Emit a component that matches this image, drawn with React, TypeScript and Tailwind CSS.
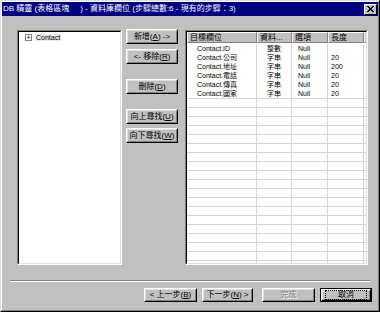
import React from 'react';

const font = { fontFamily: '"Liberation Sans", "Noto Sans CJK TC", sans-serif' };

type Row = { name: string; type: string; opt: string; len: string };

const rows: Row[] = [
  { name: 'Contact.ID', type: '整數', opt: 'Null', len: '' },
  { name: 'Contact.公司', type: '字串', opt: 'Null', len: '20' },
  { name: 'Contact.地址', type: '字串', opt: 'Null', len: '200' },
  { name: 'Contact.電話', type: '字串', opt: 'Null', len: '20' },
  { name: 'Contact.傳真', type: '字串', opt: 'Null', len: '20' },
  { name: 'Contact.國家', type: '字串', opt: 'Null', len: '20' },
];

function Btn({ children, className = '' }: { children: React.ReactNode; className?: string }) {
  // classic raised button
  return (
    <div className={`border border-t-white border-l-white border-r-black border-b-black ${className}`}>
      <div className="h-full border border-t-[#dfdfdf] border-l-[#dfdfdf] border-r-[#808080] border-b-[#808080] flex items-center justify-center text-[8px] leading-none text-black whitespace-nowrap">
        {children}
      </div>
    </div>
  );
}

function HeadCell({ w, children }: { w: string; children?: React.ReactNode }) {
  return (
    <div className={`${w} h-full shrink-0 border border-t-white border-l-white border-r-[#808080] border-b-[#808080] flex items-center pl-[2px] text-[8px] leading-none overflow-hidden whitespace-nowrap`}>
      {children}
    </div>
  );
}

export default function App() {
  const empty = Array.from({ length: 25 - rows.length });

  return (
    <div style={font} className="w-[380px] h-[312px] bg-[#c0c0c0] border border-t-[#dfdfdf] border-l-[#dfdfdf] border-r-black border-b-black overflow-hidden">
      <div className="h-full border border-t-white border-l-white border-r-[#808080] border-b-[#808080] flex flex-col">
        {/* title bar */}
        <div className="h-[14px] bg-[#000080] flex items-center pl-[1px] pr-[1px] text-white text-[8px] leading-none whitespace-nowrap">
          <span>DB 精靈 (表格區塊</span>
          <span className="w-[11px]" />
          <span>) - 資料庫欄位 (步驟總數:6 - 現有的步驟：3)</span>
          <div className="ml-auto w-[13px] h-[11px] bg-[#c0c0c0] border border-t-white border-l-white border-r-black border-b-black flex items-center justify-center">
            <svg width="7" height="6" viewBox="0 0 7 6">
              <path d="M0 0L6 6M1 0L7 6M6 0L0 6M7 0L1 6" stroke="black" strokeWidth="1" />
            </svg>
          </div>
        </div>

        {/* main area */}
        <div className="flex pl-[15px] pt-[14px] gap-[4px]">
          {/* tree */}
          <div className="w-[105px] h-[235px] border border-t-[#808080] border-l-[#808080] border-r-white border-b-white">
            <div className="h-full border border-t-black border-l-black border-r-[#dfdfdf] border-b-[#dfdfdf] bg-white pl-[6px] pt-[1px]">
              <div className="flex items-center gap-[3px] h-[8px]">
                <div className="w-[7px] h-[7px] border border-[#808080] flex items-center justify-center text-[7px] leading-none text-black">+</div>
                <span className="text-[7px] leading-none bg-[#e8e8e8] px-[1px]">Contact</span>
              </div>
            </div>
          </div>

          {/* action buttons */}
          <div className="flex flex-col w-[52px]">
            <Btn className="h-[15px] mt-[-1px]">新增(<u>A</u>) -&gt;</Btn>
            <Btn className="h-[15px] mt-[5px]">&lt;- 移除(<u>R</u>)</Btn>
            <Btn className="h-[15px] mt-[15px]">刪除(<u>D</u>)</Btn>
            <Btn className="h-[15px] mt-[15px]">向上尋找(<u>U</u>)</Btn>
            <Btn className="h-[15px] mt-[4px]">向下尋找(<u>W</u>)</Btn>
          </div>

          {/* field table */}
          <div className="ml-[3px] w-[183px] h-[235px] border border-t-[#808080] border-l-[#808080] border-r-white border-b-white">
            <div className="h-full border border-t-black border-l-black border-r-[#dfdfdf] border-b-[#dfdfdf] bg-white flex flex-col overflow-hidden">
              <div className="h-[11px] flex bg-[#c0c0c0] shrink-0">
                <HeadCell w="w-[70px]">目標欄位</HeadCell>
                <HeadCell w="w-[35px]">資料...</HeadCell>
                <HeadCell w="w-[36px]">選項</HeadCell>
                <HeadCell w="w-[36px]">長度</HeadCell>
                <HeadCell w="w-[2px]" />
              </div>
              <div className="flex-1 pt-[1px]">
                {rows.map((r) => (
                  <div key={r.name} className="h-[9px] flex text-[7px] leading-none items-center whitespace-nowrap">
                    <div className="w-[70px] shrink-0 pl-[10px] border-r border-[#d4d4d4] h-full flex items-center">{r.name}</div>
                    <div className="w-[35px] shrink-0 pl-[10px] border-r border-[#d4d4d4] h-full flex items-center">{r.type}</div>
                    <div className="w-[36px] shrink-0 pl-[6px] border-r border-[#d4d4d4] h-full flex items-center">{r.opt}</div>
                    <div className="w-[36px] shrink-0 pl-[3px] border-r border-[#d4d4d4] h-full flex items-center">{r.len}</div>
                  </div>
                ))}
                {empty.map((_, i) => (
                  <div key={i} className="h-[9px] flex border-t border-[#d4d4d4]">
                    <div className="w-[70px] shrink-0 border-r border-[#d4d4d4]" />
                    <div className="w-[35px] shrink-0 border-r border-[#d4d4d4]" />
                    <div className="w-[36px] shrink-0 border-r border-[#d4d4d4]" />
                    <div className="w-[36px] shrink-0 border-r border-[#d4d4d4]" />
                  </div>
                ))}
              </div>
            </div>
          </div>
        </div>

        {/* separator */}
        <div className="mt-[15px] mx-[8px] h-[2px] border-t border-t-[#808080] border-b border-b-white" />

        {/* wizard buttons */}
        <div className="flex justify-end gap-[5px] pr-[6px] mt-[6px]">
          <Btn className="w-[53px] h-[14px]">&lt; 上一步(<u>B</u>)</Btn>
          <Btn className="w-[51px] h-[14px] mr-[4px]">下一步(<u>N</u>) &gt;</Btn>
          <Btn className="w-[53px] h-[14px]">
            <span className="text-[#808080] [text-shadow:1px_1px_0_#fff]">完成</span>
          </Btn>
          <div className="w-[52px] h-[14px] border border-black">
            <Btn className="h-full">
              <span className="border border-dotted border-black px-[12px] leading-[8px]">取消</span>
            </Btn>
          </div>
        </div>
      </div>
    </div>
  );
}
